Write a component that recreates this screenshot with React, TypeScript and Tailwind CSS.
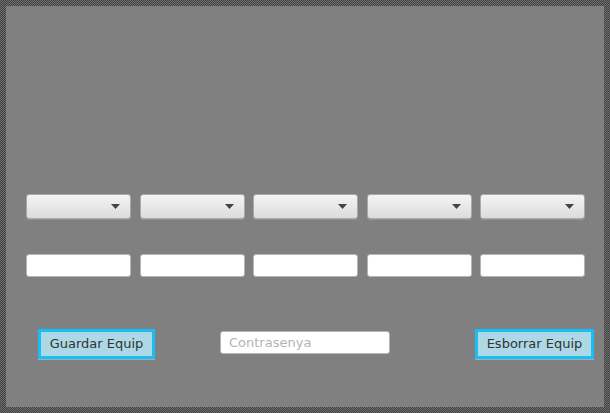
const Combo: React.FC = () => {
  return (
    <div className="w-[105px] h-[25px] flex items-center justify-end pr-[10px] rounded-[3px] border border-[#a9a9a9] bg-gradient-to-b from-[#f4f4f4] to-[#dcdcdc] shadow-[0_1px_0_rgba(255,255,255,0.15)]">
      <svg width="9" height="5" viewBox="0 0 9 5">
        <path d="M0 0 L9 0 L4.5 5 Z" fill="#444" />
      </svg>
    </div>
  )
}

const Field: React.FC = () => {
  return <div className="w-[105px] h-[23px] rounded-[3px] border border-[#b5b5b5] bg-white" />
}

export default function App() {
  return (
    <div className="w-[610px] h-[413px] p-[6px] bg-[repeating-conic-gradient(#404040_0%_25%,#707070_0%_50%)] bg-[length:2px_2px] font-['DejaVu_Sans',sans-serif]">
      <div className="w-full h-full bg-[#808080] flex flex-col pt-[188px]">
        <div className="flex justify-between pl-[20px] pr-[19px]">
          <Combo />
          <Combo />
          <Combo />
          <Combo />
          <Combo />
        </div>
        <div className="flex justify-between pl-[20px] pr-[19px] mt-[35px]">
          <Field />
          <Field />
          <Field />
          <Field />
          <Field />
        </div>
        <div className="grid grid-cols-[1fr_auto_1fr] items-start mt-[52px]">
          <div className="pl-[32px]">
            <button className="w-[117px] h-[30px] border-[3px] border-[#16bff5] bg-[#add8e6] text-[13px] text-[#333] shadow-[0_1px_0_rgba(255,255,255,0.35)]">
              Guardar Equip
            </button>
          </div>
          <div className="mt-[2px] w-[170px] h-[23px] rounded-[3px] border border-[#b5b5b5] bg-white flex items-center px-[8px] text-[13px] text-[#b4b4b4]">
            Contrasenya
          </div>
          <div className="flex justify-end pr-[10px]">
            <button className="w-[119px] h-[30px] border-[3px] border-[#16bff5] bg-[#add8e6] text-[13px] text-[#333] shadow-[0_1px_0_rgba(255,255,255,0.35)]">
              Esborrar Equip
            </button>
          </div>
        </div>
      </div>
    </div>
  )
}
